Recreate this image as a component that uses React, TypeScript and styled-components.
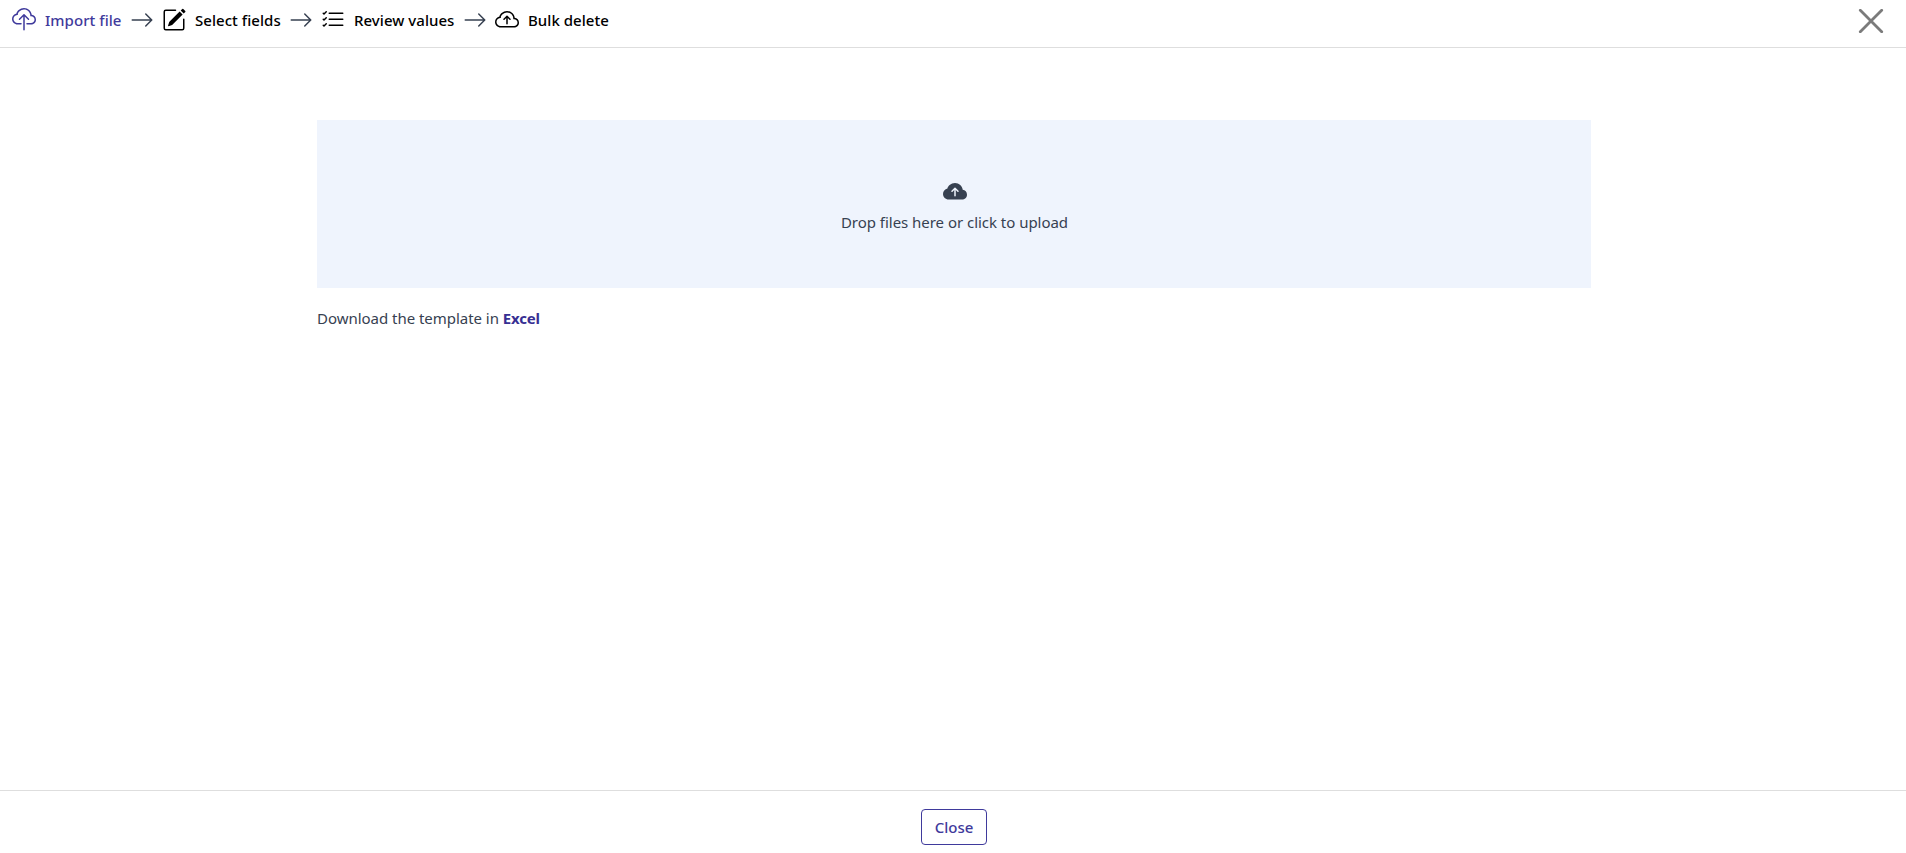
import React from "react";
import styled, { createGlobalStyle } from "styled-components";
import {
  BsArrowRight,
  BsCloudArrowUp,
  BsCloudArrowUpFill,
  BsCloudUpload,
  BsListCheck,
  BsPencilSquare,
} from "react-icons/bs";

const GlobalStyle = createGlobalStyle`
  *, *::before, *::after { box-sizing: border-box; }
  body {
    margin: 0;
    background: #fff;
    color: #374151;
    font-family: "Segoe UI", "Noto Sans", sans-serif;
    font-size: 15px;
    line-height: 24px;
  }
`;

const Page = styled.div`
  display: flex;
  flex-direction: column;
  height: 100vh;
`;

const Header = styled.header`
  display: flex;
  justify-content: space-between;
  align-items: flex-start;
  height: 48px;
  padding: 8px 22px 0 12px;
  border-bottom: 1px solid #dedede;
`;

const Steps = styled.nav`
  display: flex;
  align-items: center;
  gap: 8px;
  svg { flex: none; }
`;

const Step = styled.div<{ $active?: boolean }>`
  display: flex;
  align-items: center;
  gap: 9px;
  color: ${(p) => (p.$active ? "#3f3a9c" : "#000")};
  font-weight: 500;
  letter-spacing: 0.04px;
  white-space: nowrap;
`;

const StepLabel = styled.span<{ $width: number }>`
  width: ${(p) => p.$width}px;
`;

const CloseIconButton = styled.button`
  display: flex;
  margin-top: 1px;
  padding: 0;
  border: 0;
  background: none;
  color: #7b7b7b;
  cursor: pointer;
`;

const Main = styled.main`
  flex: 1;
  padding: 72px 315px 0 317px;
`;

const DropZone = styled.div`
  display: flex;
  flex-direction: column;
  align-items: center;
  height: 168px;
  padding: 60px 0 0 1px;
  gap: 6px;
  background: #eff4fd;
  letter-spacing: -0.03px;
  cursor: pointer;
`;

const Template = styled.p`
  margin: 18px 0 0;
  letter-spacing: -0.03px;
`;

const TemplateLink = styled.a`
  color: #372f93;
  font-weight: 700;
  letter-spacing: -0.2px;
`;

const Footer = styled.footer`
  display: flex;
  justify-content: center;
  align-items: flex-start;
  height: 63px;
  padding: 18px 0 0 2px;
  border-top: 1px solid #dedede;
`;

const CloseButton = styled.button`
  width: 66px;
  height: 36px;
  padding: 0;
  border: 1px solid #3f3a9c;
  border-radius: 4px;
  background: #fff;
  color: #3f3a9c;
  font: inherit;
  font-weight: 500;
  cursor: pointer;
`;

const steps = [
  { label: "Import file", width: 77, Icon: BsCloudUpload },
  { label: "Select fields", width: 86, Icon: BsPencilSquare },
  { label: "Review values", width: 101, Icon: BsListCheck },
  { label: "Bulk delete", width: 82, Icon: BsCloudArrowUp },
];

export default function App() {
  return (
    <Page>
      <GlobalStyle />
      <Header>
        <Steps>
          {steps.map(({ label, width, Icon }, i) => (
            <React.Fragment key={label}>
              {i > 0 && <BsArrowRight size={24} />}
              <Step $active={i === 0}>
                <Icon size={24} />
                <StepLabel $width={width}>{label}</StepLabel>
              </Step>
            </React.Fragment>
          ))}
        </Steps>
        <CloseIconButton aria-label="Close">
          <svg width="26" height="24" viewBox="0 0 26 24" fill="none" stroke="currentColor" strokeWidth="2.8">
            <path d="M2.3 1.3 23.7 22.7M23.7 1.3 2.3 22.7" strokeLinecap="round" />
          </svg>
        </CloseIconButton>
      </Header>
      <Main>
        <DropZone>
          <BsCloudArrowUpFill size={24} />
          <span>Drop files here or click to upload</span>
        </DropZone>
        <Template>
          Download the template in <TemplateLink>Excel</TemplateLink>
        </Template>
      </Main>
      <Footer>
        <CloseButton>Close</CloseButton>
      </Footer>
    </Page>
  );
}
